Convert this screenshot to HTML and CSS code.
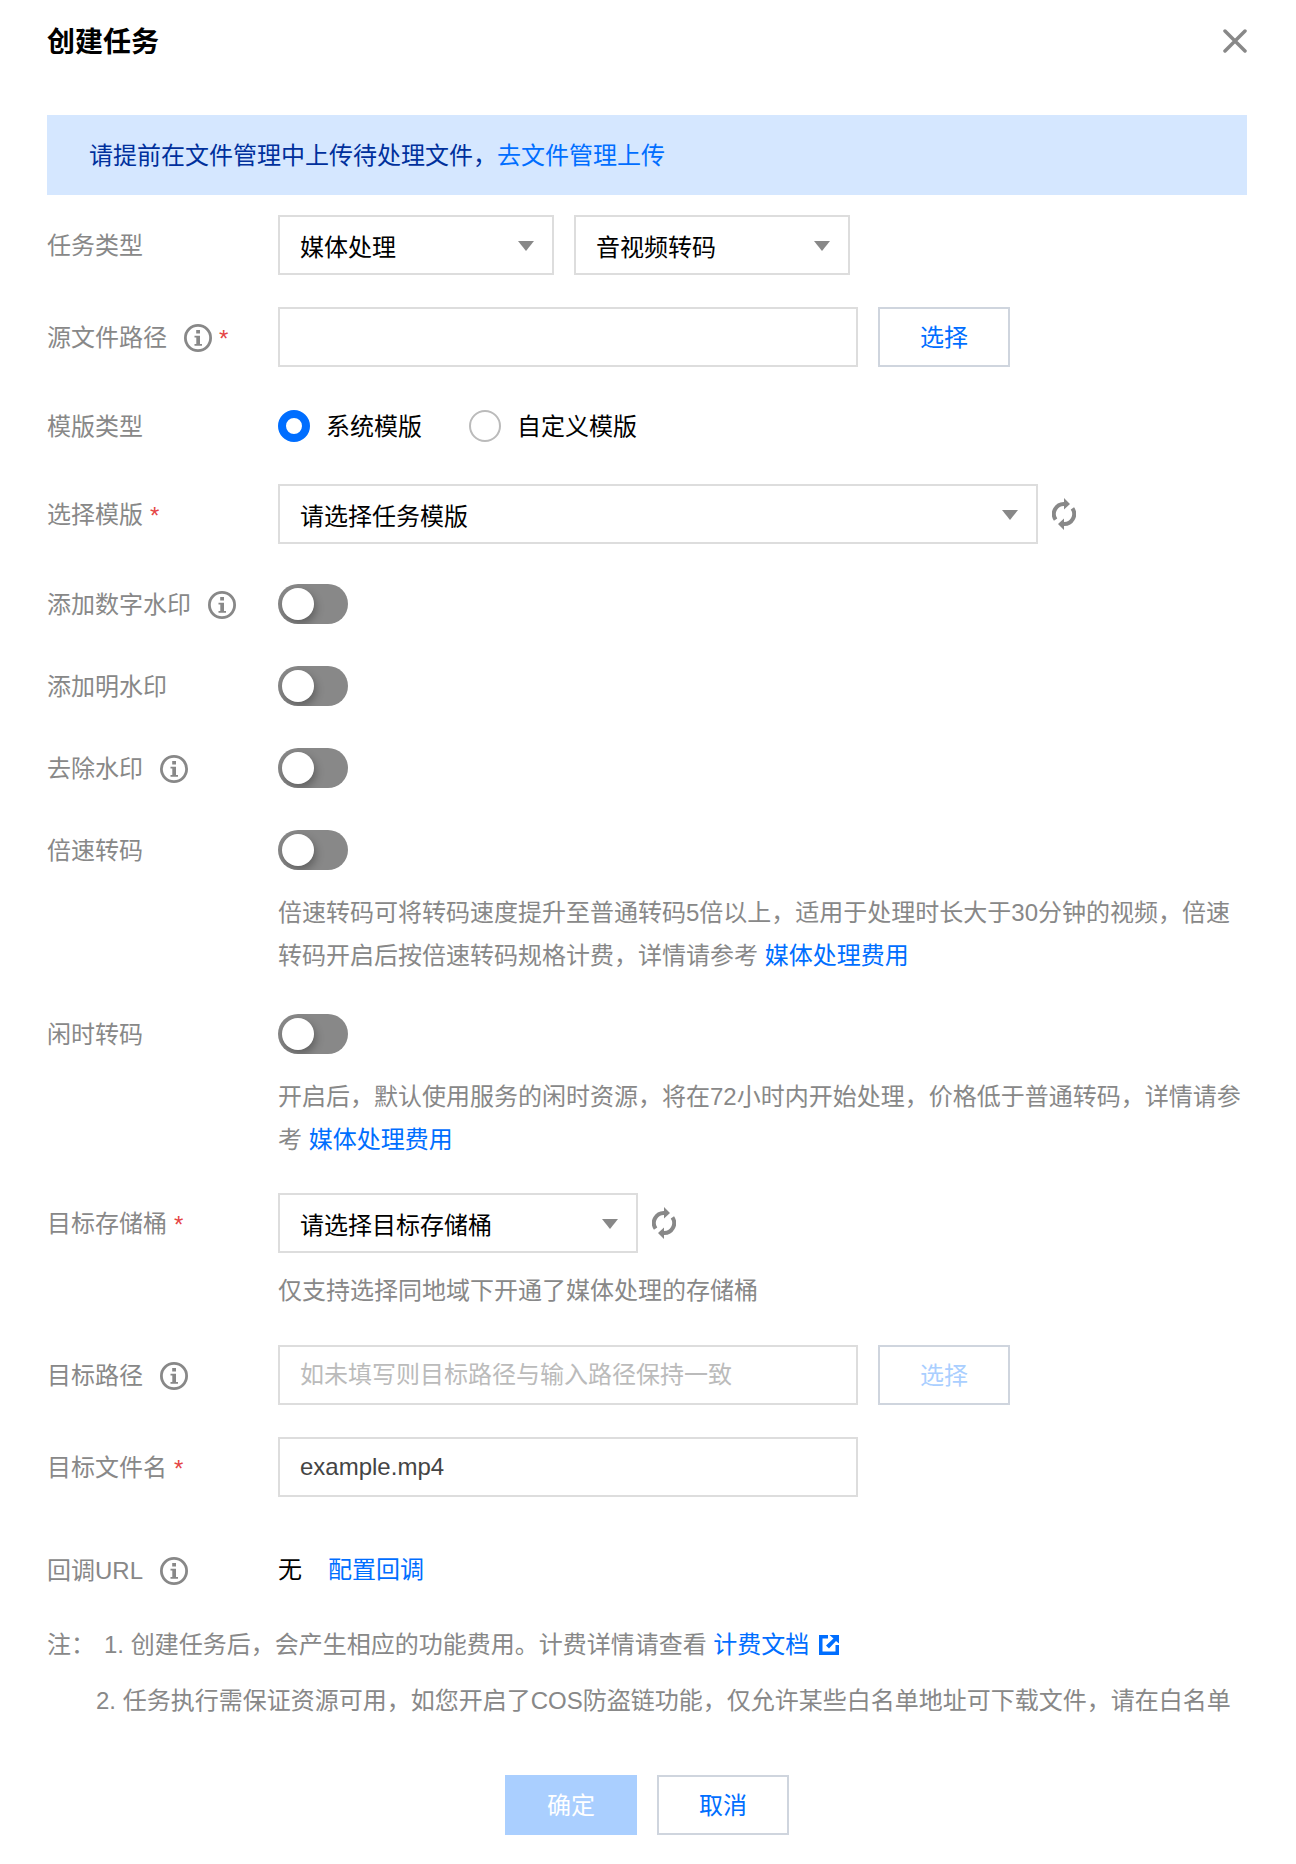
FILE: index.html
```html
<!DOCTYPE html>
<html lang="zh-CN">
<head>
<meta charset="utf-8">
<meta name="viewport" content="width=device-width, initial-scale=1">
<title>创建任务</title>
<link rel="stylesheet" href="styles.css">
</head>
<body>
<svg class="sprite" aria-hidden="true">
  <symbol id="icon-info" viewBox="0 0 28 28">
    <circle cx="14" cy="14" r="12.600" fill="none" stroke="currentColor" stroke-width="2.800"/>
    <path fill="currentColor" d="M12.200 6H16v3.500h-3.800zM10.500 11.700H16V20h2v1.800h-7.500V20h1.800v-6.500h-1.800z"/>
  </symbol>
  <symbol id="icon-refresh" viewBox="0 0 24 32">
    <path fill="none" stroke="currentColor" stroke-width="4" d="M3.6 21.6A10 10 0 0 1 12.500 6M20.400 10.400A10 10 0 0 1 11.500 26"/>
    <path fill="currentColor" d="M12 0l6 6-6 5.500zM12 32l-6-6 6-5.500z"/>
  </symbol>
  <symbol id="icon-external" viewBox="0 0 20 20">
    <path fill="currentColor" d="M0 0h9v3.500H3.500v13h13v-6.500H20v10H0zM10.500 0H20v8.500l-3-2.500-7 7.500-3-3L14.500 3.500z"/>
  </symbol>
</svg>

<main class="dialog">
  <header class="dialog-head">
    <h1 class="dialog-title">创建任务</h1>
    <button class="icon-btn" type="button" aria-label="关闭">
      <svg width="24" height="24" viewBox="0 0 24 24"><path d="M2 2l20 20M22 2L2 22" stroke="currentColor" stroke-width="3.500" stroke-linecap="round"/></svg>
    </button>
  </header>

  <p class="notice">请提前在文件管理中上传待处理文件，<a href="#files">去文件管理上传</a></p>

  <form class="form">
    <div class="row">
      <label class="label" for="type">任务类型</label>
      <div class="controls">
        <span class="select select-s"><select id="type"><option>媒体处理</option></select></span>
        <span class="select select-s"><select aria-label="任务子类型"><option>音视频转码</option></select></span>
      </div>
    </div>

    <div class="row">
      <label class="label" for="source">源文件路径<svg class="info"><use href="#icon-info"/></svg><span class="required">*</span></label>
      <div class="controls">
        <input class="text" id="source" type="text">
        <button class="btn" type="button">选择</button>
      </div>
    </div>

    <div class="row row-radio" role="radiogroup" aria-labelledby="tpl-type">
      <span class="label" id="tpl-type">模版类型</span>
      <div class="radios">
        <label class="radio"><input type="radio" name="tpl" checked><span class="radio-text">系统模版</span></label>
        <label class="radio"><input type="radio" name="tpl"><span class="radio-text">自定义模版</span></label>
      </div>
    </div>

    <div class="row">
      <label class="label" for="template">选择模版<span class="required">*</span></label>
      <div class="controls controls-tight">
        <span class="select select-l"><select id="template"><option>请选择任务模版</option></select></span>
        <button class="icon-btn" type="button" aria-label="刷新模版"><svg class="refresh"><use href="#icon-refresh"/></svg></button>
      </div>
    </div>

    <div class="switches">
      <div class="row row-switch">
        <label class="label" for="sw1">添加数字水印<svg class="info"><use href="#icon-info"/></svg></label>
        <div class="controls"><input class="switch" id="sw1" type="checkbox" role="switch"></div>
      </div>
      <div class="row row-switch">
        <label class="label" for="sw2">添加明水印</label>
        <div class="controls"><input class="switch" id="sw2" type="checkbox" role="switch"></div>
      </div>
      <div class="row row-switch">
        <label class="label" for="sw3">去除水印<svg class="info"><use href="#icon-info"/></svg></label>
        <div class="controls"><input class="switch" id="sw3" type="checkbox" role="switch"></div>
      </div>
      <div class="row row-switch">
        <label class="label" for="sw4">倍速转码</label>
        <div class="controls"><input class="switch" id="sw4" type="checkbox" role="switch"></div>
        <p class="hint">倍速转码可将转码速度提升至普通转码5倍以上，适用于处理时长大于30分钟的视频，倍速转码开启后按倍速转码规格计费，详情请参考 <a href="#price">媒体处理费用</a></p>
      </div>
      <div class="row row-switch">
        <label class="label" for="sw5">闲时转码</label>
        <div class="controls"><input class="switch" id="sw5" type="checkbox" role="switch"></div>
        <p class="hint">开启后，默认使用服务的闲时资源，将在72小时内开始处理，价格低于普通转码，详情请参考 <a href="#price">媒体处理费用</a></p>
      </div>
    </div>

    <div class="row">
      <label class="label" for="bucket">目标存储桶<span class="required">*</span></label>
      <div class="controls controls-tight">
        <span class="select select-m"><select id="bucket"><option>请选择目标存储桶</option></select></span>
        <button class="icon-btn" type="button" aria-label="刷新存储桶"><svg class="refresh"><use href="#icon-refresh"/></svg></button>
      </div>
      <p class="hint">仅支持选择同地域下开通了媒体处理的存储桶</p>
    </div>

    <div class="row">
      <label class="label" for="target">目标路径<svg class="info"><use href="#icon-info"/></svg></label>
      <div class="controls">
        <input class="text" id="target" type="text" placeholder="如未填写则目标路径与输入路径保持一致">
        <button class="btn" type="button" disabled>选择</button>
      </div>
    </div>

    <div class="row">
      <label class="label" for="filename">目标文件名<span class="required">*</span></label>
      <div class="controls"><input class="text" id="filename" type="text" value="example.mp4"></div>
    </div>

    <div class="row row-callback">
      <span class="label">回调URL<svg class="info"><use href="#icon-info"/></svg></span>
      <div class="callback"><span>无</span><a href="#callback">配置回调</a></div>
    </div>

    <div class="notes">
      <p class="note"><span class="note-mark">注：</span>1. 创建任务后，会产生相应的功能费用。计费详情请查看 <a href="#billing">计费文档<svg class="external"><use href="#icon-external"/></svg></a></p>
      <p class="note note-next">2. 任务执行需保证资源可用，如您开启了COS防盗链功能，仅允许某些白名单地址可下载文件，请在白名单</p>
    </div>

    <footer class="actions">
      <button class="btn btn-primary" type="submit" disabled>确定</button>
      <button class="btn" type="button">取消</button>
    </footer>
  </form>
</main>
</body>
</html>
```

FILE: styles.css
```css
* {
  box-sizing: border-box;
}

body {
  margin: 0;
  background: #fff;
  color: #000;
  font: 24px/36px "Liberation Sans", "Noto Sans CJK SC", sans-serif;
}

p,
h1 {
  margin: 0;
}

a {
  color: #006eff;
  text-decoration: none;
}

button,
input,
select {
  margin: 0;
  font: inherit;
}

.sprite {
  position: absolute;
  width: 0;
  height: 0;
}

.dialog {
  padding: 20px 49px 29px 47px;
}

.dialog-head {
  display: flex;
  align-items: center;
  justify-content: space-between;
  height: 42px;
  margin-bottom: 53px;
}

.dialog-title {
  padding-top: 4px;
  font-size: 28px;
  line-height: 42px;
  font-weight: 700;
}

.icon-btn {
  display: flex;
  padding: 0;
  border: 0;
  background: none;
  color: #888;
  cursor: pointer;
}

.notice {
  margin-bottom: 20px;
  padding: 23px 42px 21px;
  background: #d5e7ff;
  color: #00309c;
}

/* Form rows */
.row {
  display: grid;
  grid-template-columns: 231px minmax(0, 1fr);
  grid-auto-rows: minmax(60px, auto);
  margin-bottom: 32px;
}

.row-radio {
  grid-auto-rows: 53px;
}

.switches {
  margin-top: 35px;
}

.row-switch {
  grid-auto-rows: minmax(50px, auto);
}

.row-callback {
  grid-auto-rows: 50px;
  margin: 48px 0 22px;
}

.label {
  display: flex;
  align-items: center;
  padding-top: 2px;
  color: #888;
}

.info {
  flex: none;
  width: 28px;
  height: 28px;
  margin-left: 17px;
}

.required {
  margin-left: 7px;
  padding-top: 2px;
  color: #e54545;
  line-height: 28px;
}

.controls {
  display: flex;
  align-items: center;
  gap: 20px;
}

.controls-tight {
  gap: 14px;
}

.hint {
  grid-column: 2;
  align-self: start;
  margin-top: 16px;
  color: #888;
  line-height: 43px;
}

/* Controls */
.select {
  position: relative;
  height: 60px;
}

.select-s {
  width: 276px;
}

.select-m {
  width: 360px;
}

.select-l {
  width: 760px;
}

.select select {
  width: 100%;
  height: 60px;
  padding: 6px 48px 0 20px;
  border: 2px solid #ddd;
  border-radius: 0;
  background: #fff;
  color: #000;
  appearance: none;
}

.select::after {
  content: "";
  position: absolute;
  top: 26px;
  right: 20px;
  border: 8px solid transparent;
  border-top: 10px solid #888;
  border-bottom: 0;
  pointer-events: none;
}

.text {
  width: 580px;
  height: 60px;
  padding: 0 20px;
  border: 2px solid #ddd;
  border-radius: 0;
  background: #fff;
  color: #444;
}

.text::placeholder {
  color: #bbb;
  opacity: 1;
}

.btn {
  width: 132px;
  height: 60px;
  padding: 2px 0 0;
  border: 2px solid #cfd5de;
  background: #fff;
  color: #006eff;
}

.btn:disabled {
  color: #aacfff;
}

.btn-primary:disabled {
  border-color: #aacfff;
  background: #aacfff;
  color: #fff;
}

.refresh {
  width: 24px;
  height: 32px;
}

.radios {
  display: flex;
  align-items: center;
  gap: 47px;
}

.radio {
  display: flex;
  align-items: center;
  gap: 16px;
}

.radio-text {
  padding-top: 2px;
}

.radio input {
  width: 32px;
  height: 32px;
  border: 2px solid #bbb;
  border-radius: 50%;
  background: #fff;
  appearance: none;
}

.radio input:checked {
  border: 8px solid #006eff;
}

.switch {
  display: flex;
  width: 70px;
  height: 40px;
  padding: 4px;
  border-radius: 20px;
  background: #888;
  overflow: hidden;
  appearance: none;
}

.switch::before {
  content: "";
  width: 32px;
  height: 32px;
  border-radius: 50%;
  background: #fff;
  box-shadow: 2px 4px 8px rgba(0, 0, 0, 0.3);
}

.switch:checked {
  justify-content: flex-end;
  background: #006eff;
}

.callback {
  display: flex;
  align-items: center;
  gap: 26px;
}

/* Notes and footer */
.notes {
  margin-bottom: 46px;
  color: #888;
  line-height: 56px;
}

.note-mark {
  margin-right: 9px;
}

.note-next {
  padding-left: 49px;
}

.external {
  width: 20px;
  height: 20px;
  margin-left: 10px;
  vertical-align: -2px;
}

.actions {
  display: flex;
  justify-content: center;
  gap: 20px;
}
```
